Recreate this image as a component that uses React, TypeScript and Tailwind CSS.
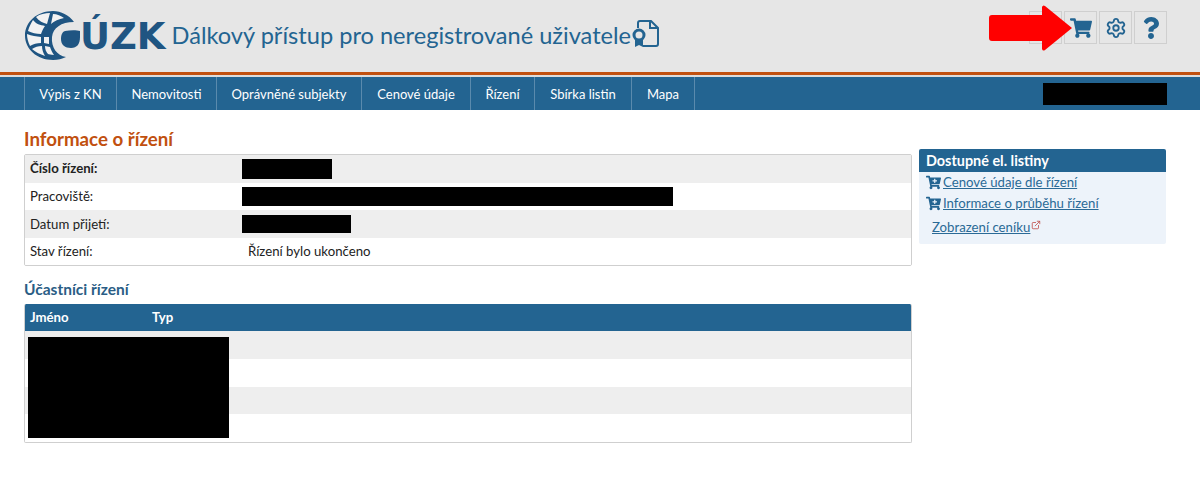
import { FaShoppingCart, FaCartPlus, FaQuestion } from 'react-icons/fa'
import { Settings, ExternalLink } from 'lucide-react'

const menu = [
  { label: 'Výpis z KN', w: 'w-[92px]' },
  { label: 'Nemovitosti', w: 'w-[100px]' },
  { label: 'Oprávněné subjekty', w: 'w-[145px]' },
  { label: 'Cenové údaje', w: 'w-[109px]' },
  { label: 'Řízení', w: 'w-[64px]' },
  { label: 'Sbírka listin', w: 'w-[97px]' },
  { label: 'Mapa', w: 'w-[63px]' },
]

function Logo() {
  return (
    <div className="flex items-center">
      <svg width="60" height="50" viewBox="0 0 60 50" className="-mr-[5px] shrink-0">
        {/* globe crescent, opens to the right */}
        <path d="M28 0C12 0 0 11 0 24.5S12 49 28 49c5 0 9-1 13-3-9-1-15-10-14-20 1-9 9-15 22-15C44 4 36 0 28 0z" fill="#1f5582" />
        <path d="M11 6c4-3 9-4 14-4l-3 11c-4-1-8-3-11-7zM8 9c3 4 7 5 12 6-2 3-3 5-4 8-5 0-9-1-13-3 1-4 3-8 5-11zM2 23c5 2 9 2 14 3v6c-4 0-8 1-11 3-2-4-3-8-3-12zM7 38c3-2 6-3 10-3 0 3 1 7 3 10-5-2-10-4-13-7zM28 3c4 0 8 2 11 4-5 1-10 3-13 6zM19 26h5v7l-5-1zM20 35l5 1c1 3 2 5 4 8-3 0-5-1-6-1-2-2-3-5-3-8z" fill="#f2f2f2" />
        <path d="M40 20c5-1 12-1 15 0v6c0 7-3 11-9 11-6 0-10-3-10-9 0-4 1-7 4-8z" fill="#1f5582" />
      </svg>
      <span className="font-['DejaVu_Sans',sans-serif] text-[37px] font-bold leading-none text-[#1f5582]">ÚZK</span>
    </div>
  )
}

function CertIcon() {
  return (
    <svg width="28" height="28" viewBox="0 0 28 28" fill="none" className="-mt-[4px] shrink-0">
      <path d="M6 8V3a2 2 0 0 1 2-2h11l7 7v16a2 2 0 0 1-2 2H11" stroke="#236491" strokeWidth="2" />
      <path d="M18 1v7h8" stroke="#236491" strokeWidth="2" />
      <circle cx="7" cy="15" r="5" stroke="#236491" strokeWidth="3" />
      <path d="M3 19v8l4-2 4 2v-8z" fill="#236491" />
    </svg>
  )
}

function IconBox({ children }: { children: React.ReactNode }) {
  return (
    <div className="flex h-[33px] w-[33px] items-center justify-center border border-[#cfcfcf] text-[#236491]">
      {children}
    </div>
  )
}

function Redacted({ className }: { className: string }) {
  return <div className={`bg-black ${className}`} />
}

const rowClass = 'flex h-[27.5px] items-center px-[5px] even:bg-white odd:bg-[#eeeeee]'

export default function App() {
  return (
    <div className="relative min-h-screen overflow-hidden bg-white font-['Lato',sans-serif] text-[13.2px] text-[#222]">
      <header className="flex h-[72px] items-center justify-between bg-[#e6e6e6] pl-[25px] pr-[33px]">
        <div className="flex items-center gap-[1px]">
          <Logo />
          <h1 className="ml-[5px] text-[23.6px] leading-none text-[#236491]">Dálkový přístup pro neregistrované uživatele</h1>
          <CertIcon />
        </div>
        <div className="-mt-[17px] flex gap-[2px]">
          <IconBox><span /></IconBox>
          <IconBox><FaShoppingCart size={22} /></IconBox>
          <IconBox><Settings size={22} strokeWidth={2} /></IconBox>
          <IconBox><FaQuestion size={22} /></IconBox>
        </div>
      </header>
      <div className="h-[3px] bg-[#c1500f]" />
      <div className="h-[2px] bg-[#dcdcdc]" />
      <nav className="flex h-[33px] items-center justify-between bg-[#236491] pl-6 pr-[33px]">
        <ul className="flex h-full border-l border-[#5a8aad]">
          {menu.map((item) => (
            <li key={item.label} className={`flex items-center justify-center border-r border-[#5a8aad] pt-[3px] text-[13px] text-white ${item.w}`}>
              {item.label}
            </li>
          ))}
        </ul>
        <Redacted className="mt-[1px] h-[22px] w-[124px]" />
      </nav>

      <main className="flex items-start gap-[7px] px-6">
        <div className="w-[888px] shrink-0">
          <h2 className="mt-[17px] text-[18.7px] font-bold leading-[24px] text-[#c1500f]">Informace o řízení</h2>
          <div className="mt-[3px] overflow-hidden rounded-[2px] border border-[#cfcfcf]">
            <div className={rowClass}>
              <div className="w-[212px] pt-[1px] font-bold">Číslo řízení:</div>
              <Redacted className="h-[20px] w-[90px]" />
            </div>
            <div className={rowClass}>
              <div className="w-[212px] pt-[2px]">Pracoviště:</div>
              <Redacted className="h-[19px] w-[431px]" />
            </div>
            <div className={rowClass}>
              <div className="w-[212px] pt-[2px]">Datum přijetí:</div>
              <Redacted className="h-[18px] w-[109px]" />
            </div>
            <div className={rowClass}>
              <div className="w-[218px] pt-[2px]">Stav řízení:</div>
              <div className="pt-[2px]">Řízení bylo ukončeno</div>
            </div>
          </div>
          <h3 className="mt-[12px] text-[15.5px] font-bold leading-[22px] text-[#2a5d85]">Účastníci řízení</h3>
          <div className="relative mt-[4px] overflow-hidden rounded-[2px] border border-[#cfcfcf] border-t-0">
            <div className="flex h-[27px] items-center bg-[#236491] px-[5px] font-bold text-white">
              <div className="w-[122px]">Jméno</div>
              <div>Typ</div>
            </div>
            <div className="h-[28px] bg-[#eeeeee]" />
            <div className="h-[28px] bg-white" />
            <div className="h-[27px] bg-[#eeeeee]" />
            <div className="h-[28px] bg-white" />
            <Redacted className="absolute left-[3px] top-[33px] h-[101px] w-[201px]" />
          </div>
        </div>
        <aside className="mt-[39px] w-[247px] rounded-[2px] bg-[#edf3fa] pb-[7px]">
          <div className="flex h-[23px] items-center rounded-t-[2px] bg-[#236491] px-[7px] text-[14.4px] font-bold text-white">Dostupné el. listiny</div>
          <div className="flex items-center gap-[2px] pl-[7px] leading-[20px] text-[#2a6a96]">
            <FaCartPlus size={15} className="text-[#236491]" />
            <a className="underline">Cenové údaje dle řízení</a>
          </div>
          <div className="mt-[1px] flex items-center gap-[2px] pl-[7px] leading-[20px] text-[#2a6a96]">
            <FaCartPlus size={15} className="text-[#236491]" />
            <a className="underline">Informace o průběhu řízení</a>
          </div>
          <div className="mt-[4px] flex items-start gap-[1px] pl-[13px] leading-[20px] text-[#2a6a96]">
            <a className="underline">Zobrazení ceníku</a>
            <ExternalLink size={10} className="mt-[3px] text-[#c0504d]" />
          </div>
        </aside>
      </main>

      <svg width="83" height="46" viewBox="0 0 83 46" className="absolute left-[989px] top-[5px]">
        <path d="M3 10h50V2a2 2 0 0 1 3-1l27 22-27 22a2 2 0 0 1-3-1v-8H3a3 3 0 0 1-3-3V13a3 3 0 0 1 3-3z" fill="#ff0000" />
      </svg>
    </div>
  )
}
